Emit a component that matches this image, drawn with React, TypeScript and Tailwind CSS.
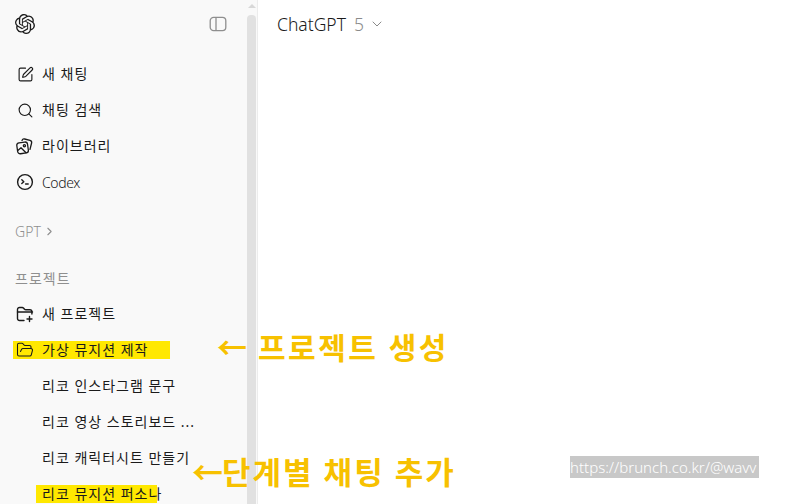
import { SiOpenai } from "react-icons/si";
import { SquarePen, Search, ChevronRight, ChevronDown, FolderOpen } from "lucide-react";

const font = "font-['Noto_Sans','Noto_Sans_CJK_KR',sans-serif]";

function Row({ icon, label, extra, latin }: { icon?: React.ReactNode; label: string; extra?: React.ReactNode; latin?: boolean }) {
  return (
    <div className="relative flex h-9 shrink-0 items-center pl-[16px] text-[14px] text-[#1a1a1a]">
      {extra}
      {icon ? <span className="relative mr-[8px] flex h-[18px] w-[18px] items-center justify-center">{icon}</span> : <span className="mr-[8px] w-[18px]" />}
      <span className={latin ? "relative tracking-[-0.4px] font-light" : "relative -mt-[2px] tracking-[1px]"}>{label}</span>
    </div>
  );
}

function LibraryIcon() {
  return (
    <svg width="18" height="18" viewBox="0 0 18 18" fill="none" stroke="#1a1a1a" strokeWidth="1.3" strokeLinecap="round" strokeLinejoin="round">
      <rect x="1.2" y="5.4" width="10.8" height="11" rx="2.6" transform="rotate(-8 6.6 11)" />
      <path d="M6 3.4c.5-1.2 1.4-1.7 2.6-1.4l5.4 1.4c1.2.4 1.9 1.4 1.6 2.6l-1.6 6.4" />
      <circle cx="8.4" cy="8.8" r="1.1" />
      <path d="M1.8 13.6 5 10.8l5 5" />
    </svg>
  );
}

function CodexIcon() {
  return (
    <svg width="18" height="18" viewBox="0 0 18 18" fill="none" stroke="#1a1a1a" strokeWidth="1.4" strokeLinecap="round" strokeLinejoin="round">
      <circle cx="9" cy="9" r="7.4" />
      <path d="m5.8 6.8 2 1.9-2 1.9M9.6 11h2.6" />
    </svg>
  );
}

function NewFolderIcon() {
  return (
    <svg width="18" height="18" viewBox="0 0 18 18" fill="none" stroke="#1a1a1a" strokeWidth="1.4" strokeLinecap="round" strokeLinejoin="round">
      <path d="M8 15.5H3.6c-1.2 0-2.1-.9-2.1-2.1V4.6c0-1.2.9-2.1 2.1-2.1h2.6c.6 0 1.1.3 1.5.7l.8 1c.3.4.8.6 1.3.6h4c1.2 0 2.1.9 2.1 2.1V9" />
      <path d="M1.5 7h15M13.5 11.5v5M11 14h5" />
    </svg>
  );
}

function SidebarIcon() {
  return (
    <svg width="18" height="18" viewBox="0 0 18 18" fill="none" stroke="#8f8f8f" strokeWidth="1.3">
      <rect x="1.2" y="2.4" width="15.6" height="13.2" rx="3.4" />
      <path d="M7 2.6v12.8" />
    </svg>
  );
}

export default function App() {
  return (
    <div className={`relative flex h-[504px] w-[788px] overflow-hidden bg-white ${font}`}>
      <aside className="flex w-[247px] shrink-0 flex-col bg-[#f9f9f9]">
        <div className="flex h-[48px] shrink-0 items-center justify-between pl-[15px] pr-[20px]">
          <SiOpenai size={20} color="#1a1a1a" />
          <SidebarIcon />
        </div>
        <nav className="mt-[8px] flex shrink-0 flex-col">
          <Row icon={<SquarePen size={17} strokeWidth={1.6} />} label="새 채팅" />
          <Row icon={<Search size={17} strokeWidth={1.6} />} label="채팅 검색" />
          <Row icon={<LibraryIcon />} label="라이브러리" />
          <Row icon={<CodexIcon />} label="Codex" latin />
        </nav>
        <div className="mt-[13px] flex h-9 shrink-0 items-center pl-[15px] text-[14px] font-light text-[#8f8f8f]">
          GPT
          <ChevronRight size={13} className="ml-[2px]" />
        </div>
        <div className="mt-[11px] flex h-9 shrink-0 items-center pl-[15px] text-[14px] tracking-[1px] text-[#8f8f8f]">프로젝트</div>
        <Row icon={<NewFolderIcon />} label="새 프로젝트" />
        <Row
          icon={<FolderOpen size={20} strokeWidth={1.4} />}
          label="가상 뮤지션 제작"
          extra={<span className="absolute left-[13px] top-[9px] h-[18px] w-[157px] bg-[#ffe800]" />}
        />
        <Row label="리코 인스타그램 문구" />
        <Row label="리코 영상 스토리보드 ..." />
        <Row label="리코 캐릭터시트 만들기" />
        <Row
          label="리코 뮤지션 퍼소나"
          extra={<span className="absolute left-[36px] top-[9px] h-[18px] w-[121px] bg-[#ffe800]" />}
        />
      </aside>

      <div className="flex w-[9px] shrink-0 flex-col bg-[#f9f9f9]">
        <div className="mx-auto mt-[4px] h-0 w-0 border-x-[4px] border-b-[4px] border-x-transparent border-b-[#d8d8d8]" />
        <div className="mt-[7px] flex-1 rounded-t-[4px] bg-[#e1e1e1]" />
      </div>
      <div className="w-[2px] shrink-0 border-r border-[#ececec] bg-[#f9f9f9]" />

      <main className="flex-1">
        <div className="flex h-[48px] items-center pl-[19px] text-[17.5px] font-light text-[#1a1a1a]">
          ChatGPT
          <span className="ml-[8px] text-[#8a8a8a]">5</span>
          <ChevronDown size={16} strokeWidth={1.5} className="ml-[5px] text-[#8a8a8a]" />
        </div>
      </main>

      <div className="absolute left-[217px] top-[328px] flex whitespace-nowrap text-[30px] font-bold leading-[40px] text-[#f7c100]">
        <span className="w-[41px]">←</span>
        <span className="tracking-[2.5px]">프로젝트 생성</span>
      </div>
      <div className="absolute left-[192px] top-[452px] flex whitespace-nowrap text-[31px] font-bold leading-[40px] text-[#f7c100]">
        <span className="w-[30px]">←</span>
        <span className="tracking-[2px]">단계별 채팅 추가</span>
      </div>
      <div className="absolute left-[570px] top-[456px] flex h-[22px] w-[189px] items-center overflow-hidden whitespace-nowrap bg-[#c8c8c8] text-[15px] font-light leading-[22px] text-white">
        https://brunch.co.kr/@wavv
      </div>
    </div>
  );
}
